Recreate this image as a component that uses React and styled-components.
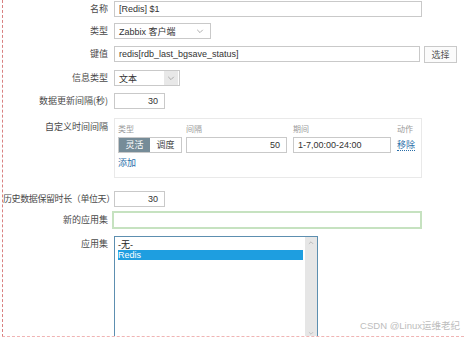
import styled, { createGlobalStyle } from "styled-components";

const Global = createGlobalStyle`
  html, body { margin: 0; padding: 0; background: #fff; }
  body { font-family: "Liberation Sans", "Noto Sans CJK SC", sans-serif; color: #333; }
`;

const Page = styled.div`
  position: relative;
  width: 462px;
  height: 337px;
  margin-left: 2px;
  box-sizing: border-box;
  border-left: 1px dashed #d98080;
  border-bottom: 1px dashed #f0b4b4;
  overflow: hidden;
`;

const Form = styled.div`
  display: grid;
  grid-template-columns: 105px 1fr;
  column-gap: 6px;
  padding-top: 1px;
  font-size: 9px;
`;

const Label = styled.div`
  text-align: right;
  white-space: nowrap;
  color: #4a4a4a;
  font-family: "Noto Sans CJK SC", sans-serif;
  line-height: ${(p) => p.$lh || 16}px;
  height: ${(p) => p.$h || 16}px;
  padding-top: ${(p) => p.$pt || 0}px;
  margin-bottom: ${(p) => p.$mb ?? 7}px;
  letter-spacing: ${(p) => p.$ls || 0}px;
`;

const Field = styled.div`
  display: flex;
  align-items: flex-start;
  gap: 4px;
  margin-bottom: ${(p) => p.$mb ?? 7}px;
  margin-left: ${(p) => p.$ml || 0}px;
`;

const Input = styled.div`
  box-sizing: border-box;
  width: ${(p) => p.$w}px;
  height: 16px;
  border: 1px solid #c9c9c9;
  background: #fff;
  padding: 0 ${(p) => (p.$right ? 6 : 4)}px;
  line-height: 14px;
  font-size: 9px;
  color: #333;
  text-align: ${(p) => (p.$right ? "right" : "left")};
  white-space: nowrap;
  overflow: hidden;
`;

const GreenInput = styled.div`
  box-sizing: border-box;
  width: 310px;
  height: 18px;
  border: 2px solid #c6e2c0;
  background: #fff;
`;

const Select = styled.div`
  box-sizing: border-box;
  width: ${(p) => p.$w}px;
  height: 16px;
  border: 1px solid #c9c9c9;
  display: flex;
  align-items: center;
  justify-content: space-between;
  padding-left: 4px;
  font-size: 9px;
  font-family: "Liberation Sans", "Noto Sans CJK SC", sans-serif;
`;

const Chevron = styled.span`
  width: 14px;
  height: 14px;
  margin-right: ${(p) => (p.$boxed ? 1 : 3)}px;
  display: flex;
  align-items: center;
  justify-content: center;
  background: ${(p) => (p.$boxed ? "#e8e8e8" : "transparent")};
  color: #999;
`;

const Button = styled.div`
  box-sizing: border-box;
  width: 33px;
  height: 17px;
  border: 1px solid #c9c9c9;
  background: #fbfbfb;
  font-family: "Noto Sans CJK SC", sans-serif;
  font-size: 9px;
  line-height: 15px;
  text-align: center;
  color: #555;
`;

const Panel = styled.div`
  box-sizing: border-box;
  width: 308px;
  height: 60px;
  border: 1px solid #e9e9e9;
  padding: 3px 0 0 3px;
  margin-bottom: 12px;
`;

const PanelGrid = styled.div`
  display: grid;
  grid-template-columns: 64px 101px 98px auto;
  column-gap: 5px;
  align-items: center;
  & > :nth-child(2), & > :nth-child(6) { margin-left: -1px; }
  & > :nth-child(3), & > :nth-child(7) { margin-left: 0px; }
  & > :nth-child(4), & > :nth-child(8) { margin-left: 1px; }
`;

const Head = styled.div`
  color: #9a9a9a;
  font-family: "Noto Sans CJK SC", sans-serif;
  font-size: 8px;
  line-height: 14px;
  margin-bottom: 1px;
  white-space: nowrap;
`;

const Toggle = styled.div`
  display: flex;
  box-sizing: border-box;
  width: 64px;
  height: 16px;
  border: 1px solid #c9c9c9;
`;

const ToggleItem = styled.div`
  flex: 1;
  text-align: center;
  font-family: "Noto Sans CJK SC", sans-serif;
  font-size: 9px;
  line-height: 14px;
  background: ${(p) => (p.$active ? "#768c98" : "#fff")};
  color: ${(p) => (p.$active ? "#fff" : "#444")};
`;

const Link = styled.span`
  justify-self: start;
  color: #2a6ea8;
  font-family: "Noto Sans CJK SC", sans-serif;
  font-size: 9px;
  white-space: nowrap;
  border-bottom: ${(p) => (p.$dotted ? "1px dotted #2a6ea8" : "none")};
  line-height: 11px;
`;

const AddRow = styled.div`
  margin-top: 4px;
  line-height: 12px;
`;

const ListBox = styled.div`
  box-sizing: border-box;
  width: 204px;
  height: 104px;
  border: 1px solid #5d8fb0;
  display: flex;
  background: #fff;
`;

const Options = styled.div`
  flex: 1;
  padding: 3px 2px 0 3px;
`;

const Option = styled.div`
  height: 10px;
  line-height: 10px;
  font-size: 9px;
  font-family: "Liberation Sans", "Noto Sans CJK SC", sans-serif;
  color: ${(p) => (p.$sel ? "#fff" : "#222")};
  background: ${(p) => (p.$sel ? "#1e9ee0" : "transparent")};
`;

const Scrollbar = styled.div`
  width: 12px;
  background: #e6e6e6;
  display: flex;
  flex-direction: column;
  justify-content: space-between;
  align-items: center;
  padding: 3px 0;
  color: #aaa;
`;

const Watermark = styled.div`
  position: absolute;
  right: 4px;
  bottom: 4px;
  font-family: "Liberation Sans", "Noto Sans CJK SC", sans-serif;
  font-size: 9.5px;
  color: #bdbdbd;
`;

const Down = ({ size = 8 }) => (
  <svg width={size} height={size} viewBox="0 0 10 10">
    <path d="M1.5 3.5 L5 7 L8.5 3.5" fill="none" stroke="currentColor" strokeWidth="1" />
  </svg>
);

const Up = ({ size = 6 }) => (
  <svg width={size} height={size} viewBox="0 0 10 10">
    <path d="M1.5 6.5 L5 3 L8.5 6.5" fill="none" stroke="currentColor" strokeWidth="1.2" />
  </svg>
);

export default function App() {
  return (
    <>
      <Global />
      <Page>
        <Form>
          <Label $mb={6}>名称</Label>
          <Field $mb={6}>
            <Input $w={308}>[Redis] $1</Input>
          </Field>

          <Label>类型</Label>
          <Field>
            <Select $w={97}>
              Zabbix 客户端
              <Chevron>
                <Down />
              </Chevron>
            </Select>
          </Field>

          <Label>键值</Label>
          <Field>
            <Input $w={306}>redis[rdb_last_bgsave_status]</Input>
            <Button>选择</Button>
          </Field>

          <Label>信息类型</Label>
          <Field>
            <Select $w={66}>
              文本
              <Chevron $boxed>
                <Down />
              </Chevron>
            </Select>
          </Field>

          <Label $mb={9}>数据更新间隔(秒)</Label>
          <Field $mb={9}>
            <Input $w={51} $right>
              30
            </Input>
          </Field>

          <Label $h={60} $mb={12} $pt={1}>
            自定义时间间隔
          </Label>
          <Panel>
            <PanelGrid>
              <Head>类型</Head>
              <Head>间隔</Head>
              <Head>期间</Head>
              <Head>动作</Head>
              <Toggle>
                <ToggleItem $active>灵活</ToggleItem>
                <ToggleItem>调度</ToggleItem>
              </Toggle>
              <Input $w={101} $right>
                50
              </Input>
              <Input $w={98}>1-7,00:00-24:00</Input>
              <Link $dotted>移除</Link>
            </PanelGrid>
            <AddRow>
              <Link>添加</Link>
            </AddRow>
          </Panel>

          <Label $mb={4} $ls={-0.4}>历史数据保留时长（单位天）</Label>
          <Field $mb={4}>
            <Input $w={51} $right>
              30
            </Input>
          </Field>

          <Label $h={18} $lh={18} $mb={7}>
            新的应用集
          </Label>
          <Field $mb={7} $ml={-2}>
            <GreenInput />
          </Field>

          <Label $mb={0}>应用集</Label>
          <Field $mb={0}>
            <ListBox>
              <Options>
                <Option>-无-</Option>
                <Option $sel>Redis</Option>
              </Options>
              <Scrollbar>
                <Up />
                <Down size={6} />
              </Scrollbar>
            </ListBox>
          </Field>
        </Form>
        <Watermark>CSDN @Linux运维老纪</Watermark>
      </Page>
    </>
  );
}
